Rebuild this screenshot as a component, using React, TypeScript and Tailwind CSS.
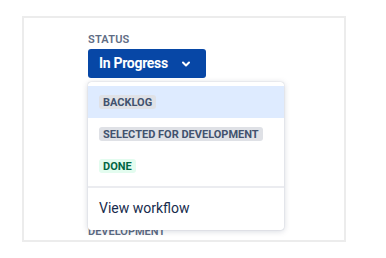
import React from 'react';

// Status transition dropdown, opened over an issue field panel
const Lozenge = ({ label, tone }: { label: string; tone: 'gray' | 'green' }) => (
  <span
    className={
      tone === 'green'
        ? 'inline-flex h-[14px] items-center rounded-[3px] bg-[#e3fcef] px-[4px] text-[11px] font-bold leading-none text-[#006644]'
        : 'inline-flex h-[14px] items-center rounded-[3px] bg-[#dfe1e6] px-[4px] text-[11px] font-bold leading-none text-[#42526e]'
    }
  >
    {label}
  </span>
);

export default function App() {
  return (
    <div className="h-[258px] w-[386px] bg-white pl-[22px] pt-[16px]" style={{ fontFamily: 'Roboto, "Liberation Sans", sans-serif' }}>
      <div className="relative h-[226px] w-[324px] border-2 border-[#ececec] pl-[64px] pt-[14px]">
        <div className="text-[11px] font-semibold leading-[16px] tracking-[0.2px] text-[#5e6c84]">STATUS</div>
        <button className="mt-[1px] flex h-[29px] w-[118px] items-center rounded-[3px] bg-[#0747a6] pl-[11px] pr-[16px] text-[14px] font-bold tracking-[-0.3px] text-white">
          <span>In Progress</span>
          <svg className="ml-auto" width="8" height="6" viewBox="0 0 8 6" fill="none">
            <path d="M1 1.5 L4 4.5 L7 1.5" stroke="white" strokeWidth="2" strokeLinecap="round" strokeLinejoin="round" />
          </svg>
        </button>
        <div className="mt-[146px] text-[11px] font-semibold leading-[16px] text-[#5e6c84]">DEVELOPMENT</div>

        <div className="absolute left-[64px] top-[64px] w-[196px] rounded-[3px] bg-white py-[4px] shadow-[0_1px_6px_rgba(9,30,66,0.18),0_0_1px_rgba(9,30,66,0.31)]">
          <div className="flex h-[32px] items-center bg-[#deebff] pl-[11px]">
            <Lozenge label="BACKLOG" tone="gray" />
          </div>
          <div className="flex h-[32px] items-center pl-[11px]">
            <Lozenge label="SELECTED FOR DEVELOPMENT" tone="gray" />
          </div>
          <div className="flex h-[32px] items-center pl-[11px]">
            <Lozenge label="DONE" tone="green" />
          </div>
          <div className="mt-[4px] h-[2px] bg-[#ebecf0]" />
          <div className="flex h-[38px] items-center pl-[11px] pt-[3px] text-[14px] text-[#172b4d]">View workflow</div>
        </div>
      </div>
    </div>
  );
}
